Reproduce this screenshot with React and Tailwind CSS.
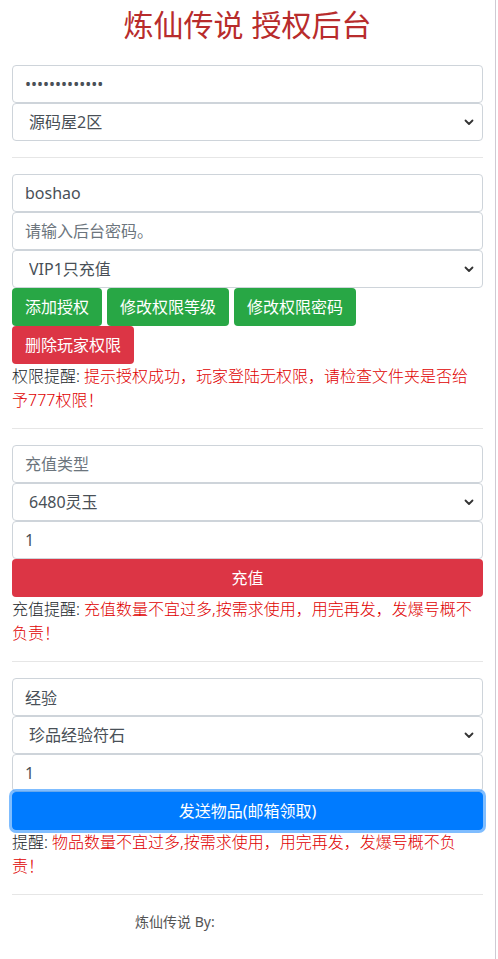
import React from 'react';

const fontStack = { fontFamily: '"Noto Sans", "Noto Sans CJK SC", sans-serif' };

const Chevron = () => (
  <svg
    className="pointer-events-none absolute right-[9px] top-1/2 -translate-y-1/2"
    width="10"
    height="10"
    viewBox="0 0 10 10"
    fill="none"
  >
    <path d="M1.5 3.5 L5 7 L8.5 3.5" stroke="#333" strokeWidth="1.8" strokeLinecap="round" strokeLinejoin="round" />
  </svg>
);

const TextInput = ({ value, placeholder, type = 'text' }) => (
  <input
    type={type}
    defaultValue={value}
    placeholder={placeholder}
    className="block h-[38px] w-full rounded-[4px] border border-[#ced4da] bg-white px-3 text-[16px] leading-6 text-[#495057] placeholder:text-[#6c757d] outline-none"
  />
);

const Select = ({ options }) => (
  <div className="relative">
    <select
      defaultValue={options[0]}
      className="block h-[38px] w-full appearance-none rounded-[4px] border border-[#ced4da] bg-white pl-4 pr-8 text-[16px] leading-6 text-[#495057] outline-none"
    >
      {options.map((o) => (
        <option key={o}>{o}</option>
      ))}
    </select>
    <Chevron />
  </div>
);

const Divider = () => <div className="my-4 h-px bg-[#e6e6e6]" />;

const Notice = ({ label, children }) => (
  <p className="text-[16px] leading-6 font-light text-[#212529]">
    {label}: <span className="text-[#e00000]">{children}</span>
  </p>
);

const App = () => {
  return (
    <div className="flex min-h-[959px] w-[498px] bg-white" style={fontStack}>
      <div className="w-[495px] px-3">
        {/* Title */}
        <h3 className="mt-[7px] mb-[22px] h-9 text-center text-[30px] leading-9 font-normal text-[#b82c2c]">
          炼仙传说 授权后台
        </h3>

        {/* Server login */}
        <TextInput type="password" value="1234567890123" />
        <Select options={['源码屋2区', '源码屋1区']} />

        <Divider />

        {/* Player permissions */}
        <TextInput value="boshao" />
        <TextInput placeholder="请输入后台密码。" />
        <Select options={['VIP1只充值', 'VIP2', 'VIP3']} />
        <div className="flex gap-x-[5px]">
          <button className="h-[38px] rounded-[4px] bg-[#28a745] px-[13px] text-[16px] text-white">添加授权</button>
          <button className="h-[38px] rounded-[4px] bg-[#28a745] px-[13px] text-[16px] text-white">修改权限等级</button>
          <button className="h-[38px] rounded-[4px] bg-[#28a745] px-[13px] text-[16px] text-white">修改权限密码</button>
        </div>
        <div className="flex">
          <button className="h-[38px] rounded-[4px] bg-[#dc3545] px-[13px] text-[16px] text-white">删除玩家权限</button>
        </div>
        <Notice label="权限提醒">提示授权成功，玩家登陆无权限，请检查文件夹是否给予777权限！</Notice>

        <Divider />

        {/* Recharge */}
        <TextInput placeholder="充值类型" />
        <Select options={['6480灵玉', '3280灵玉', '1980灵玉']} />
        <TextInput value="1" />
        <button className="block h-[38px] w-full rounded-[4px] bg-[#dc3545] text-[16px] text-white">充值</button>
        <Notice label="充值提醒">充值数量不宜过多,按需求使用，用完再发，发爆号概不负责！</Notice>

        <Divider />

        {/* Mail items */}
        <TextInput value="经验" />
        <Select options={['珍品经验符石', '经验符石']} />
        <TextInput value="1" />
        <button className="block h-[38px] w-full rounded-[4px] border border-[#007bff] bg-[#007bff] text-[16px] text-white shadow-[0_0_0_3px_rgba(0,123,255,0.5)]">
          发送物品(邮箱领取)
        </button>
        <Notice label="提醒">物品数量不宜过多,按需求使用，用完再发，发爆号概不负责！</Notice>

        <Divider />

        {/* Footer */}
        <p className="pl-[123px] text-[14px] leading-[21px] text-[#555]">炼仙传说 By:</p>
      </div>
      <div className="w-px bg-[#cfcad3]" />
    </div>
  );
};

export default App;
